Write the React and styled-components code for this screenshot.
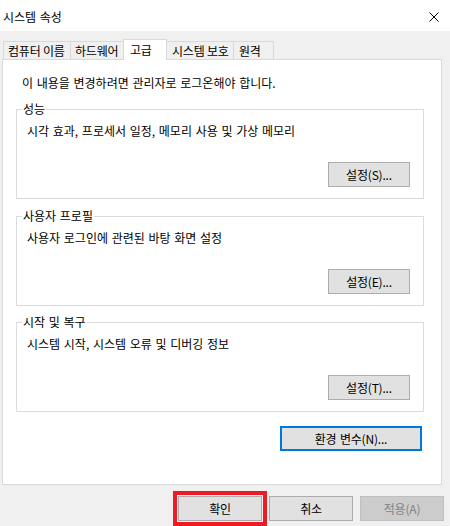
import React from "react";
import styled, { createGlobalStyle } from "styled-components";

const Global = createGlobalStyle`
  html, body { margin: 0; padding: 0; background: #f0f0f0; }
  body {
    font-family: "Noto Sans CJK KR", "Noto Sans", sans-serif;
    font-size: 12px;
    color: #000;
  }
  * { box-sizing: border-box; }
`;

const Window = styled.div`
  width: 450px;
  height: 526px;
  background: #f0f0f0;
  display: flex;
  flex-direction: column;
  overflow: hidden;
`;

const TitleBar = styled.div`
  height: 31px;
  background: #fff;
  display: flex;
  align-items: center;
  justify-content: space-between;
  padding: 2px 11px 0 3px;
`;

const Title = styled.span`
  font-size: 12px;
  line-height: 16px;
  word-spacing: 1px;
`;

const Body = styled.div`
  display: flex;
  flex-direction: column;
  padding: 8px 0 0 2px;
`;

const TabRow = styled.div`
  display: flex;
  align-items: flex-end;
  height: 20px;
  margin-left: 1px;
`;

const Tab = styled.div`
  width: ${(p) => p.$w}px;
  height: ${(p) => (p.$active ? 21 : 18)}px;
  margin-bottom: ${(p) => (p.$active ? -1 : 0)}px;
  margin-left: ${(p) => (p.$first ? 0 : -1)}px;
  background: ${(p) => (p.$active ? "#fff" : "#f0f0f0")};
  border: 1px solid #d9d9d9;
  border-bottom: none;
  position: relative;
  z-index: ${(p) => (p.$active ? 2 : 1)};
  display: flex;
  align-items: center;
  padding: 0 0 ${(p) => (p.$active ? 2 : 0)}px ${(p) => p.$pl}px;
  font-size: 12px;
  letter-spacing: -0.2px;
  white-space: nowrap;
`;

const Panel = styled.div`
  width: 440px;
  height: 426px;
  background: #fff;
  border: 1px solid #d9d9d9;
  display: flex;
  flex-direction: column;
  padding: 15px 17px 0 13px;
`;

const Intro = styled.div`
  line-height: 16px;
  padding-left: 6px;
  word-spacing: 1px;
  margin-bottom: 10px;
`;

const Group = styled.fieldset`
  margin: 0 0 ${(p) => p.$mb}px 0;
  padding: 0 13px 11px 10px;
  border: 1px solid #dcdcdc;
  min-width: 0;
  display: flex;
  flex-direction: column;
`;

const Legend = styled.legend`
  margin-left: -5px;
  padding: 0 1px;
  line-height: 16px;
  font-size: 12px;
  word-spacing: 1px;
`;

const Desc = styled.div`
  line-height: 16px;
  margin-top: 6px;
  word-spacing: 1px;
`;

const ButtonRow = styled.div`
  display: flex;
  justify-content: flex-end;
  gap: ${(p) => p.$gap || 0}px;
  margin-top: ${(p) => p.$mt || 0}px;
  padding-right: ${(p) => p.$pr || 0}px;
`;

const Button = styled.button`
  width: ${(p) => p.$w}px;
  height: 25px;
  font-family: "Noto Sans CJK KR", "Noto Sans", sans-serif;
  font-size: 12px;
  letter-spacing: -0.2px;
  word-spacing: 1px;
  color: ${(p) => (p.$disabled ? "#838383" : "#000")};
  background: ${(p) => (p.$disabled ? "#cccccc" : "#e1e1e1")};
  border: ${(p) =>
    p.$focus
      ? "2px solid #0078d7"
      : p.$disabled
      ? "1px solid #bfbfbf"
      : "1px solid #adadad"};
  padding: 0;
  margin: 0;
  display: flex;
  align-items: center;
  justify-content: center;
  outline: ${(p) => (p.$marked ? "4px solid #ed1c24" : "none")};
  outline-offset: 1px;
`;

const Footer = styled.div`
  padding: 11px 6px 0 0;
`;

const CloseIcon = () => (
  <svg width="10" height="10" viewBox="0 0 10 10">
    <path d="M0.5 0.5 L9.5 9.5 M9.5 0.5 L0.5 9.5" stroke="#000" strokeWidth="1" fill="none" />
  </svg>
);

const tabs = [
  { label: "컴퓨터 이름", w: 68, pl: 4 },
  { label: "하드웨어", w: 54, pl: 4 },
  { label: "고급", w: 44, pl: 6, active: true },
  { label: "시스템 보호", w: 68, pl: 5 },
  { label: "원격", w: 41, pl: 5 },
];

const groups = [
  { title: "성능", desc: "시각 효과, 프로세서 일정, 메모리 사용 및 가상 메모리", btn: "설정(S)...", mb: 9 },
  { title: "사용자 프로필", desc: "사용자 로그인에 관련된 바탕 화면 설정", btn: "설정(E)...", mb: 8 },
  { title: "시작 및 복구", desc: "시스템 시작, 시스템 오류 및 디버깅 정보", btn: "설정(T)...", mb: 14 },
];

export default function App() {
  return (
    <>
      <Global />
      <Window>
        <TitleBar>
          <Title>시스템 속성</Title>
          <CloseIcon />
        </TitleBar>
        <Body>
          <TabRow>
            {tabs.map((t, i) => (
              <Tab key={t.label} $w={t.w} $pl={t.pl} $active={t.active} $first={i === 0}>
                {t.label}
              </Tab>
            ))}
          </TabRow>
          <Panel>
            <Intro>이 내용을 변경하려면 관리자로 로그온해야 합니다.</Intro>
            {groups.map((g) => (
              <Group key={g.title} $mb={g.mb}>
                <Legend>{g.title}</Legend>
                <Desc>{g.desc}</Desc>
                <ButtonRow $mt={23}>
                  <Button $w={82}>{g.btn}</Button>
                </ButtonRow>
              </Group>
            ))}
            <ButtonRow $pr={2}>
              <Button $w={142} $focus>환경 변수(N)...</Button>
            </ButtonRow>
          </Panel>
        </Body>
        <Footer>
          <ButtonRow $gap={7}>
            <Button $w={84} $marked>확인</Button>
            <Button $w={84}>취소</Button>
            <Button $w={84} $disabled>적용(A)</Button>
          </ButtonRow>
        </Footer>
      </Window>
    </>
  );
}
